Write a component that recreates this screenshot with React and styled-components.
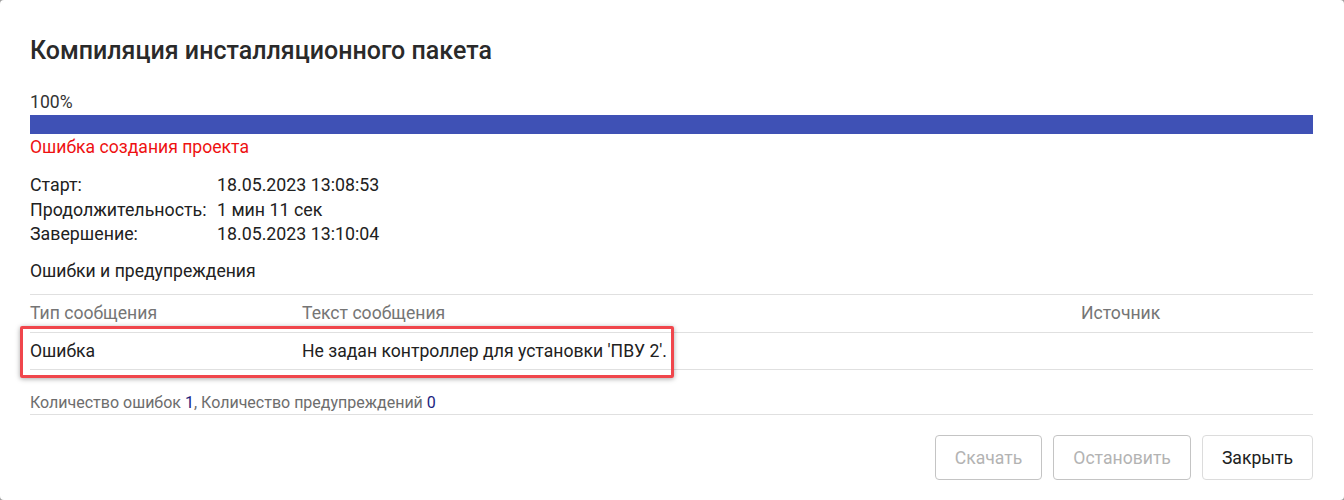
import styled, { createGlobalStyle } from 'styled-components'

const GlobalStyle = createGlobalStyle`
  html, body {
    margin: 0;
    padding: 0;
    background: #9e9e9e;
  }
  body {
    font-family: Roboto, 'Liberation Sans', sans-serif;
    color: #212121;
  }
`

const Dialog = styled.div`
  box-sizing: border-box;
  width: 1344px;
  height: 500px;
  background: #fff;
  border-radius: 4px;
  padding: 37px 31px 20px 30px;
  display: flex;
  flex-direction: column;
`

const Title = styled.h2`
  margin: 0;
  font-size: 25px;
  line-height: 28px;
  font-weight: 500;
  color: #2a2a2a;
`

const Percent = styled.div`
  margin-top: 27px;
  font-size: 17.6px;
  line-height: 20px;
  color: #333;
`

const Bar = styled.div`
  margin-top: 3px;
  height: 19px;
  background: #e0e0e0;
`

const BarFill = styled.div`
  height: 100%;
  background: #3f51b5;
`

const Status = styled.div`
  margin-top: 2px;
  font-size: 17.6px;
  line-height: 22px;
  color: #ee1111;
`

const Info = styled.div`
  margin-top: 15px;
  display: grid;
  grid-template-columns: 187px 1fr;
  font-size: 17.8px;
  line-height: 24.5px;
  color: #212121;
`

const SectionLabel = styled.div`
  margin-top: 12px;
  font-size: 17.6px;
  line-height: 24px;
  color: #212121;
`

const Table = styled.div`
  margin-top: 11px;
  border-top: 1px solid #e0e0e0;
`

const Row = styled.div`
  position: relative;
  display: grid;
  grid-template-columns: 272px 779px 1fr;
  height: ${(p) => (p.$head ? 37 : 36)}px;
  align-items: center;
  border-bottom: 1px solid #e0e0e0;
  font-size: 17.6px;
  color: ${(p) => (p.$head ? '#757575' : '#212121')};
`

const Highlight = styled.div`
  position: absolute;
  left: -10px;
  top: -7px;
  width: 654px;
  height: 52px;
  box-sizing: border-box;
  border: 3px solid #f0464c;
  border-radius: 2px;
  box-shadow: 0 1px 5px rgba(0, 0, 0, 0.35);
  pointer-events: none;
`

const Summary = styled.div`
  margin-top: 23px;
  padding-bottom: 1px;
  font-size: 16px;
  line-height: 20px;
  color: #6d6d6d;
  border-bottom: 1px solid #e0e0e0;
`

const Count = styled.span`
  color: #1a237e;
`

const Actions = styled.div`
  margin-top: auto;
  display: flex;
  justify-content: flex-end;
  gap: 11px;
`

const Button = styled.button`
  height: 45px;
  padding: 0 19px;
  background: #fff;
  border: 1px solid ${(p) => (p.disabled ? '#c4c4c4' : '#dcdcdc')};
  border-radius: 4px;
  font-family: Roboto, 'Liberation Sans', sans-serif;
  font-size: 17.6px;
  color: ${(p) => (p.disabled ? '#b3b3b3' : '#212121')};
`

export default function App() {
  return (
    <>
      <GlobalStyle />
      <Dialog>
        <Title>Компиляция инсталляционного пакета</Title>
        <Percent>100%</Percent>
        <Bar>
          <BarFill style={{ width: '100%' }} />
        </Bar>
        <Status>Ошибка создания проекта</Status>
        <Info>
          <span>Старт:</span>
          <span>18.05.2023 13:08:53</span>
          <span>Продолжительность:</span>
          <span>1 мин 11 сек</span>
          <span>Завершение:</span>
          <span>18.05.2023 13:10:04</span>
        </Info>
        <SectionLabel>Ошибки и предупреждения</SectionLabel>
        <Table>
          <Row $head>
            <span>Тип сообщения</span>
            <span>Текст сообщения</span>
            <span>Источник</span>
          </Row>
          <Row>
            <span>Ошибка</span>
            <span>Не задан контроллер для установки 'ПВУ 2'.</span>
            <span />
            <Highlight />
          </Row>
        </Table>
        <Summary>
          Количество ошибок <Count>1</Count>, Количество предупреждений{' '}
          <Count>0</Count>
        </Summary>
        <Actions>
          <Button disabled>Скачать</Button>
          <Button disabled>Остановить</Button>
          <Button>Закрыть</Button>
        </Actions>
      </Dialog>
    </>
  )
}
